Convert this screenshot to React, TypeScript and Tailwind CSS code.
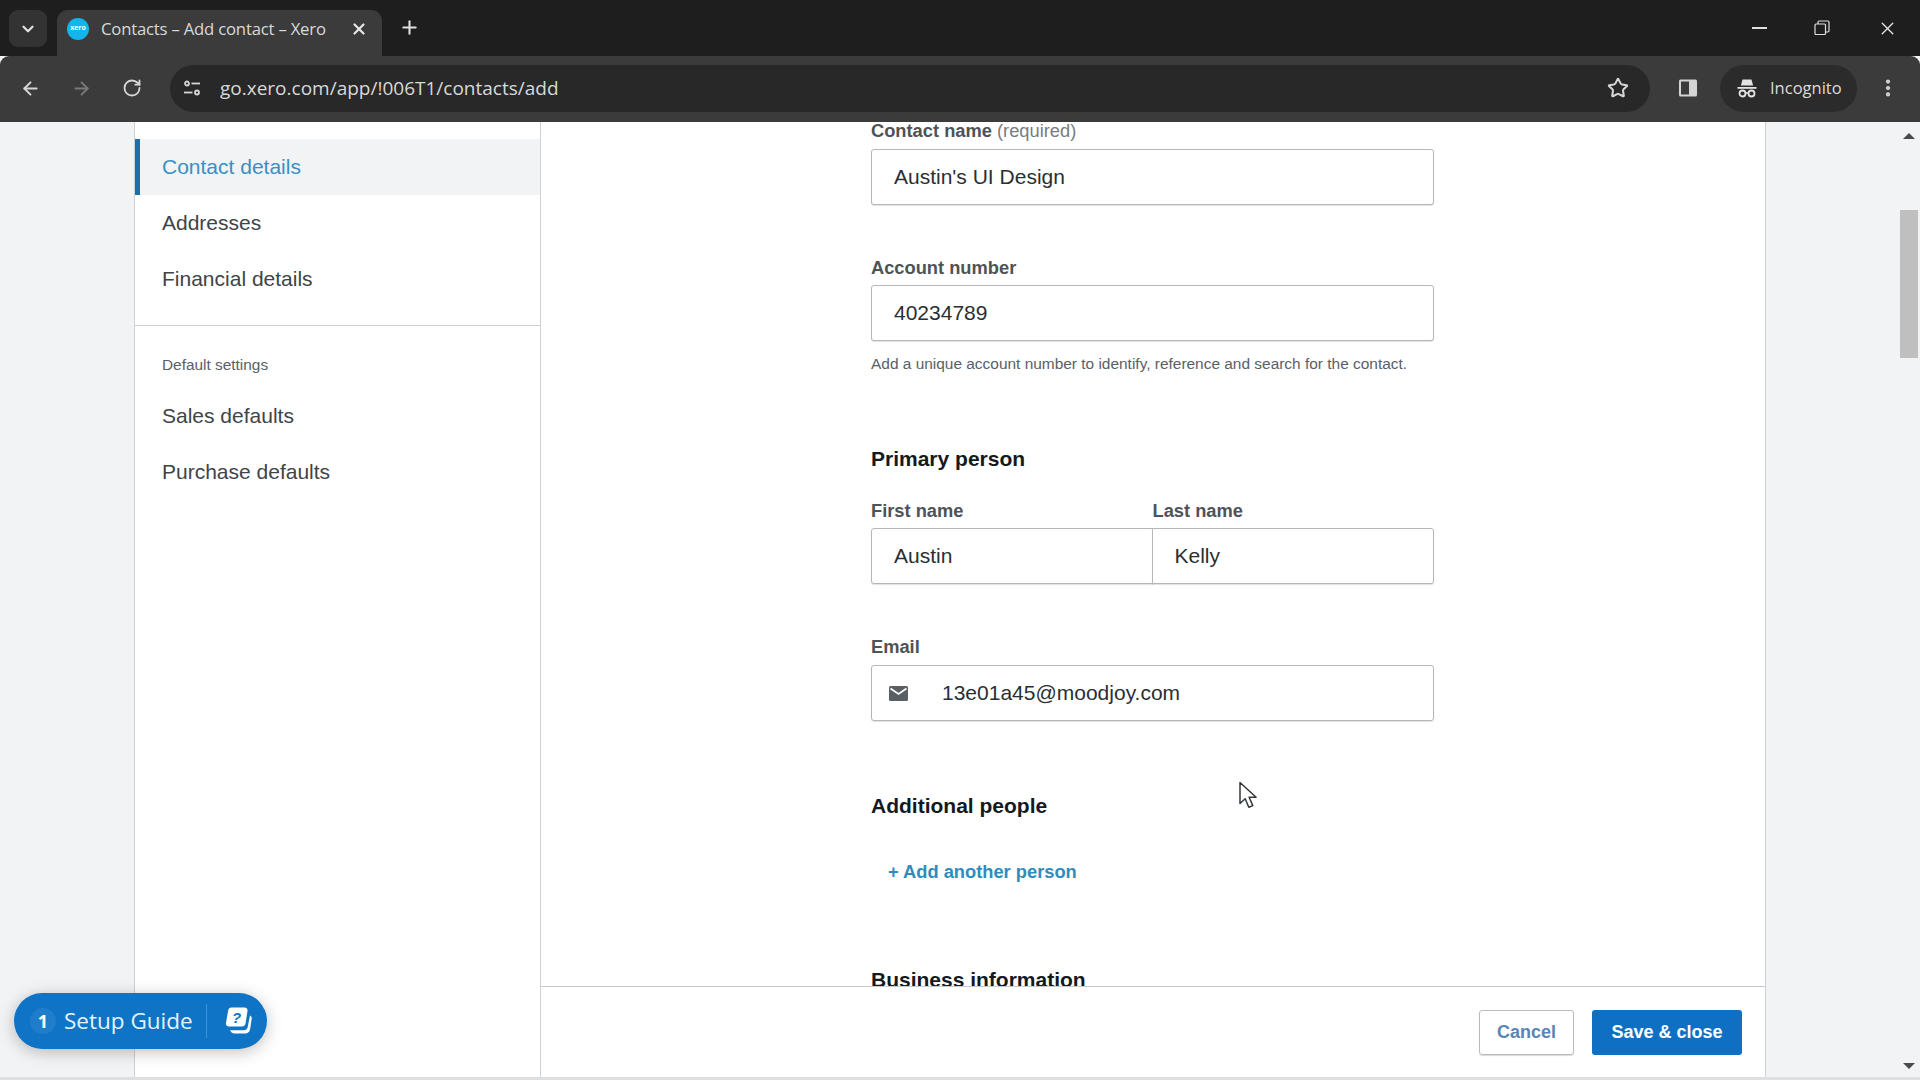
import React from "react";
import { ArrowLeft, ArrowRight, ChevronDown, MoreVertical, Plus, RotateCw, Star, X } from "lucide-react";

const pageFont = "font-['Liberation_Sans',Arial,sans-serif]";
const chromeFont = "font-['Open_Sans','Noto_Sans',sans-serif]";

function TuneIcon() {
  return (
    <svg width="20" height="20" viewBox="0 0 20 20" fill="none" stroke="#d6d6d6" strokeWidth="1.8">
      <circle cx="5" cy="5.5" r="2" />
      <path d="M9.5 5.5H18" />
      <path d="M2 14.5h8.5" />
      <circle cx="15" cy="14.5" r="2" />
    </svg>
  );
}

function SidePanelIcon() {
  return (
    <svg width="20" height="20" viewBox="0 0 20 20">
      <rect x="1" y="1.5" width="18" height="17" rx="1.5" fill="#d4d4d4" />
      <rect x="3" y="3.5" width="8" height="13" fill="#3b3b3b" />
    </svg>
  );
}

function IncognitoIcon() {
  return (
    <svg width="22" height="22" viewBox="0 0 22 22" fill="none">
      <path d="M6.5 2.5h9l1.6 6H4.9z" fill="#e2e2e2" />
      <path d="M1.5 10h19v1.8h-19z" fill="#e2e2e2" />
      <circle cx="6.5" cy="16.5" r="3" stroke="#e2e2e2" strokeWidth="1.8" />
      <circle cx="15.5" cy="16.5" r="3" stroke="#e2e2e2" strokeWidth="1.8" />
      <path d="M9.5 16h3" stroke="#e2e2e2" strokeWidth="1.6" />
    </svg>
  );
}

function RestoreIcon() {
  return (
    <svg width="16" height="16" viewBox="0 0 16 16" fill="none" stroke="#e0e0e0" strokeWidth="1.2">
      <rect x="1" y="4" width="10.5" height="10.5" rx="1" />
      <path d="M4 4V2.2C4 1.5 4.5 1 5.2 1h8.6c.7 0 1.2.5 1.2 1.2v8.6c0 .7-.5 1.2-1.2 1.2h-2.3" />
    </svg>
  );
}

function MailIcon() {
  return (
    <svg width="19" height="15" viewBox="0 0 19 15">
      <rect width="19" height="15" rx="1.5" fill="#5a5f64" />
      <path d="M1.5 2.5l8 5.5 8-5.5" fill="none" stroke="#fff" strokeWidth="1.7" />
    </svg>
  );
}

function GuideIcon() {
  return (
    <svg width="28" height="30" viewBox="0 0 28 30">
      <path d="M25 9.5c1.2.5 2 1.6 1.7 3.2l-1.6 10.5c-.4 2.5-2.3 4.3-5 4.3H9.5c-2.2 0-3.8-1.4-4.4-3.2h13.6c2.2 0 3.6-1.2 4-3.3z" fill="#fff" />
      <path d="M6.5 1.5h13c2 0 3.3 1.6 3 3.5l-2 12.5c-.3 1.8-1.6 3-3.5 3H3.8c-1.9 0-3.2-1.6-2.8-3.5L3.2 4.3C3.5 2.6 4.8 1.5 6.5 1.5z" fill="#fff" />
      <text x="11.5" y="17" textAnchor="middle" fontSize="15" fontWeight="700" fontStyle="italic" fill="#0f74c5" fontFamily="Liberation Sans, sans-serif">?</text>
    </svg>
  );
}

function Field({ value, className = "" }: { value: string; className?: string }) {
  return (
    <div className={`h-[56px] flex items-center px-[22px] text-[21px] text-[#2a2f33] bg-white border border-[#b4b7ba] rounded-[3px] shadow-[0_1px_1px_rgba(0,0,0,0.12)] ${className}`}>
      {value}
    </div>
  );
}

function Label({ children, className = "" }: { children: React.ReactNode; className?: string }) {
  return <div className={`h-[24px] leading-[24px] text-[18.3px] font-bold text-[#4d5357] ${className}`}>{children}</div>;
}

function Heading({ children, className = "" }: { children: React.ReactNode; className?: string }) {
  return <div className={`h-[26px] leading-[26px] text-[21px] font-bold text-[#14191e] ${className}`}>{children}</div>;
}

function NavItem({ label, active = false }: { label: string; active?: boolean }) {
  return (
    <div className={`h-[56px] flex items-center pl-[22px] text-[21px] border-l-[5px] ${active ? "bg-[#f2f3f4] text-[#3a8fc4] border-[#1c6fa8]" : "text-[#404448] border-transparent"}`}>
      {label}
    </div>
  );
}

function BrowserChrome() {
  return (
    <div className={`shrink-0 ${chromeFont}`}>
      <div className="h-[56px] bg-[#1e1e1e] flex items-end pl-[9px] relative">
        <div className="w-[38px] h-[37px] mb-[9px] rounded-[9px] bg-[#333333] flex items-center justify-center">
          <ChevronDown size={18} strokeWidth={3} color="#e0e0e0" />
        </div>
        <div className="w-[325px] h-[46px] ml-[10px] rounded-t-[11px] bg-[#3b3b3b] flex items-center pl-[10px] pr-[14px] pb-[9px]">
          <div className="w-[22px] h-[22px] rounded-full bg-[#13b5ea] flex items-center justify-center text-[7px] font-bold text-white">xero</div>
          <div className="ml-[12px] text-[16.7px] text-[#d9d9d9] tracking-[-0.2px] whitespace-nowrap">Contacts – Add contact – Xero</div>
          <div className="ml-auto"><X size={18} strokeWidth={3} color="#e5e5e5" /></div>
        </div>
        <div className="ml-[17px] mb-[18px]"><Plus size={21} strokeWidth={2.4} color="#e0e0e0" /></div>
        <div className="ml-auto flex items-center self-start h-[56px] pr-[22px] gap-[47px]">
          <div className="w-[15px] h-[2px] bg-[#e0e0e0]" />
          <RestoreIcon />
          <X size={21} strokeWidth={1.6} color="#e6e6e6" />
        </div>
      </div>
      <div className="h-[66px] pb-[2px] bg-[#3b3b3b] flex items-center rounded-t-[9px]">
        <div className="w-[170px] flex items-center pl-[20px] gap-[30px]">
          <ArrowLeft size={21} strokeWidth={2.2} color="#d6d6d6" />
          <ArrowRight size={21} strokeWidth={2.2} color="#77797b" />
          <RotateCw size={20} strokeWidth={2.2} color="#d6d6d6" />
        </div>
        <div className="w-[1480px] h-[47px] rounded-full bg-[#282828] flex items-center pl-[12px] pr-[21px]">
          <TuneIcon />
          <div className="ml-[18px] text-[19px] text-[#d8d8d8] whitespace-nowrap">go.xero.com/app/!006T1/contacts/add</div>
          <div className="ml-auto"><Star size={22} strokeWidth={2.2} color="#d6d6d6" /></div>
        </div>
        <div className="ml-[28px]"><SidePanelIcon /></div>
        <div className="ml-[22px] w-[137px] h-[47px] rounded-full bg-[#2b2b2b] flex items-center pl-[16px] gap-[12px]">
          <IncognitoIcon />
          <span className="text-[16.5px] text-[#dcdcdc]">Incognito</span>
        </div>
        <div className="ml-[20px]"><MoreVertical size={22} strokeWidth={2.6} color="#d6d6d6" /></div>
      </div>
    </div>
  );
}

function Sidebar() {
  return (
    <aside className="w-[407px] shrink-0 bg-white border-x border-[#cfd2d4] pt-[17px]">
      <NavItem label="Contact details" active />
      <NavItem label="Addresses" />
      <NavItem label="Financial details" />
      <div className="mt-[18px] border-t border-[#cfd2d4]" />
      <div className="mt-[30px] pl-[22px] ml-[5px] text-[15.4px] leading-[18px] text-[#5a6066]">Default settings</div>
      <div className="mt-[14px]">
        <NavItem label="Sales defaults" />
        <NavItem label="Purchase defaults" />
      </div>
    </aside>
  );
}

function ContactForm() {
  return (
    <div className="flex-1 overflow-hidden pl-[330px] pr-[331px]">
      <div className="h-[18px] leading-[18px] text-[18.3px] font-bold text-[#4d5357]">
        Contact name <span className="font-normal text-[#777c80]">(required)</span>
      </div>
      <Field value="Austin's UI Design" className="mt-[9px]" />

      <Label className="mt-[51px]">Account number</Label>
      <Field value="40234789" className="mt-[5px]" />
      <div className="mt-[14px] h-[18px] leading-[18px] text-[15.45px] text-[#5a6066] whitespace-nowrap">
        Add a unique account number to identify, reference and search for the contact.
      </div>

      <Heading className="mt-[73px]">Primary person</Heading>
      <div className="mt-[27px] flex">
        <Label className="w-1/2">First name</Label>
        <Label className="w-1/2">Last name</Label>
      </div>
      <div className="mt-[5px] flex">
        <Field value="Austin" className="w-1/2 rounded-r-none" />
        <Field value="Kelly" className="flex-1 rounded-l-none -ml-px" />
      </div>

      <Label className="mt-[51px]">Email</Label>
      <div className="mt-[6px] h-[56px] flex items-center pl-[17px] text-[21px] text-[#2a2f33] border border-[#b4b7ba] rounded-[3px] shadow-[0_1px_1px_rgba(0,0,0,0.12)]">
        <MailIcon />
        <span className="ml-[34px]">13e01a45@moodjoy.com</span>
      </div>

      <Heading className="mt-[72px]">Additional people</Heading>
      <div className="mt-[41px] pl-[17px] h-[24px] leading-[24px] text-[18.3px] font-bold text-[#2f8cbd]">+ Add another person</div>
      <Heading className="mt-[83px] whitespace-nowrap">Business information</Heading>
    </div>
  );
}

export default function App() {
  return (
    <div className={`relative w-[1920px] h-[1080px] overflow-hidden flex flex-col bg-[#f2f3f4] ${pageFont}`}>
      <BrowserChrome />

      <div className="flex-1 flex min-h-0 pl-[134px]">
        <Sidebar />
        <main className="w-[1225px] shrink-0 bg-white border-r border-[#cfd2d4] flex flex-col min-h-0">
          <ContactForm />
          <div className="h-[91px] shrink-0 bg-white border-t border-[#c8cbcd] flex items-center justify-end pr-[23px] gap-[18px] relative">
            <div className="w-[95px] h-[45px] flex items-center justify-center rounded-[3px] border border-[#b9bcbf] shadow-[0_1px_1px_rgba(0,0,0,0.15)] text-[18px] font-bold text-[#5a84b4]">Cancel</div>
            <div className="w-[150px] h-[45px] flex items-center justify-center rounded-[3px] bg-[#0f70c3] text-[18px] font-bold text-white">Save &amp; close</div>
          </div>
        </main>

        <div className="flex-1 flex justify-end">
          <div className="w-[22px] flex flex-col items-center pt-[11px] pr-[1px]">
            <div className="w-0 h-0 border-x-[6px] border-x-transparent border-b-[6px] border-b-[#4a4a4a]" />
            <div className="mt-[71px] w-[18px] h-[148px] bg-[#bfbfbf]" />
            <div className="mt-auto mb-[8px] w-0 h-0 border-x-[6px] border-x-transparent border-t-[6px] border-t-[#4a4a4a]" />
          </div>
        </div>
      </div>
      <div className="h-[3px] shrink-0 bg-[#dedfe0]" />

      <div className="absolute left-[14px] top-[993px] w-[253px] h-[56px] rounded-full bg-[#0f74c5] flex items-center pl-[16px] shadow-[0_3px_16px_rgba(0,0,0,0.25)] font-['Open_Sans','Noto_Sans',sans-serif]">
        <div className="w-[26px] h-[26px] rounded-full bg-[#1f7dcb] flex items-center justify-center text-[18px] font-bold text-white">1</div>
        <span className="ml-[8px] text-[22.5px] font-medium text-[#e4f3fc] whitespace-nowrap">Setup Guide</span>
        <div className="ml-[13px] w-px h-[34px] bg-[#3f92d4]" />
        <div className="ml-[18px]"><GuideIcon /></div>
      </div>

      <svg className="absolute left-[1238px] top-[781px]" width="20" height="29" viewBox="0 0 20 29">
        <path d="M2 1.5v21l5.2-4.8 3.6 8.6 4-1.7-3.7-8.4h7z" fill="#fff" stroke="#33383c" strokeWidth="1.5" strokeLinejoin="round" />
      </svg>
    </div>
  );
}
